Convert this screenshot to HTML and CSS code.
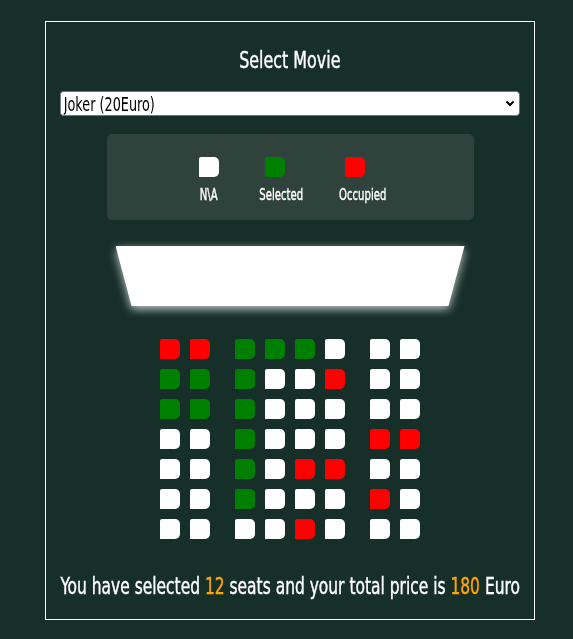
FILE: index.html
```html
<!DOCTYPE html>
<html lang="en">
<head>
<meta charset="utf-8">
<title>Movie Seat Booking</title>
<link rel="stylesheet" href="styles.css">
</head>
<body>
<div class="booking">
  <h1 class="title"><span class="squeeze">Select Movie</span></h1>
  <div class="select-wrap">
    <select class="movie-select">
      <option>Joker (20Euro)</option>
      <option>Avengers (25Euro)</option>
      <option>Toy Story (15Euro)</option>
    </select>
    <svg class="chevron" width="10" height="7" viewBox="0 0 10 7"><polyline points="1.5,1.5 5,5 8.5,1.5" fill="none" stroke="#000" stroke-width="2"/></svg>
  </div>

  <ul class="legend">
    <li class="legend-item na"><span class="seat"></span><small class="legend-label">N\A</small></li>
    <li class="legend-item sel"><span class="seat selected"></span><small class="legend-label">Selected</small></li>
    <li class="legend-item occ"><span class="seat occupied"></span><small class="legend-label">Occupied</small></li>
  </ul>

  <div class="screen-wrap"><div class="screen"></div></div>

  <div class="seats">
    <div class="row"><span class="seat occupied"></span><span class="seat occupied aisle"></span><span class="seat selected"></span><span class="seat selected"></span><span class="seat selected"></span><span class="seat aisle"></span><span class="seat"></span><span class="seat"></span></div>
    <div class="row"><span class="seat selected"></span><span class="seat selected aisle"></span><span class="seat selected"></span><span class="seat"></span><span class="seat"></span><span class="seat occupied aisle"></span><span class="seat"></span><span class="seat"></span></div>
    <div class="row"><span class="seat selected"></span><span class="seat selected aisle"></span><span class="seat selected"></span><span class="seat"></span><span class="seat"></span><span class="seat aisle"></span><span class="seat"></span><span class="seat"></span></div>
    <div class="row"><span class="seat"></span><span class="seat aisle"></span><span class="seat selected"></span><span class="seat"></span><span class="seat"></span><span class="seat aisle"></span><span class="seat occupied"></span><span class="seat occupied"></span></div>
    <div class="row"><span class="seat"></span><span class="seat aisle"></span><span class="seat selected"></span><span class="seat"></span><span class="seat occupied"></span><span class="seat occupied aisle"></span><span class="seat"></span><span class="seat"></span></div>
    <div class="row"><span class="seat"></span><span class="seat aisle"></span><span class="seat selected"></span><span class="seat"></span><span class="seat"></span><span class="seat aisle"></span><span class="seat occupied"></span><span class="seat"></span></div>
    <div class="row"><span class="seat"></span><span class="seat aisle"></span><span class="seat"></span><span class="seat"></span><span class="seat occupied"></span><span class="seat aisle"></span><span class="seat"></span><span class="seat"></span></div>
  </div>

  <p class="summary"><span class="squeeze">You have selected <span class="count">12</span> seats and your total price is <span class="count">180</span> Euro</span></p>
</div>
</body>
</html>
```
FILE: styles.css
```css
* { box-sizing: border-box; }

html, body {
  margin: 0;
  padding: 0;
  background: #172f29;
}

body {
  padding-top: 21px;
  font-family: "DejaVu Sans Condensed", "DejaVu Sans", sans-serif;
  font-stretch: condensed;
  color: #ffffff;
}

.booking {
  width: 490px;
  margin-left: 45px;
  border: 1px solid #ffffff;
  padding: 23px 14px 0;
  height: 599px;
  display: flex;
  flex-direction: column;
  align-items: center;
}

.squeeze {
  display: inline-block;
  white-space: nowrap;
  transform: scaleX(0.77);
  transform-origin: center;
}

.title {
  margin: 0;
  font-size: 23px;
  line-height: 30px;
  font-weight: normal;
  -webkit-text-stroke: 0.4px #ffffff;
  display: flex;
  justify-content: center;
  width: 100%;
}

.select-wrap {
  position: relative;
  align-self: stretch;
  margin-top: 16px;
  height: 25px;
}

.movie-select {
  display: block;
  -webkit-appearance: none;
  appearance: none;
  width: 133.33%;
  height: 25px;
  transform: scaleX(0.75);
  transform-origin: left center;
  font-family: inherit;
  font-stretch: condensed;
  font-size: 19px;
  color: #000;
  background: #fff;
  border: 1px solid #767676;
  border-radius: 5.33px / 4px;
  padding: 0 0 0 4px;
  margin: 0;
}

.chevron {
  position: absolute;
  right: 5px;
  top: 9px;
}

.legend {
  list-style: none;
  margin: 18px 0 0;
  width: 367px;
  height: 86px;
  padding: 18px 0 0;
  background: #2f423c;
  border-radius: 5px;
  display: flex;
  justify-content: center;
  gap: 36px;
}

.legend-item {
  display: flex;
  flex-direction: column;
  align-items: flex-start;
}

.legend-item.na { width: 30px; }
.legend-item.sel { width: 44px; }
.legend-item.occ { width: 47px; }

.legend-label {
  align-self: center;
  white-space: nowrap;
  font-size: 16px;
  line-height: 18px;
  margin-top: 4px;
  -webkit-text-stroke: 0.4px #ffffff;
  transform: scaleX(0.7);
}

.seat {
  display: block;
  width: 20px;
  height: 20px;
  margin: 5px;
  background: #ffffff;
  border-radius: 2px 5px 5px 0;
}

.seat.selected { background: #008000; }
.seat.occupied { background: #ff0000; }
.seat.aisle { margin-right: 20px; }

.screen-wrap {
  margin-top: 26px;
  filter: drop-shadow(0 3px 5px rgba(255, 255, 255, 0.75));
}

.screen {
  width: 349px;
  height: 60px;
  background: #ffffff;
  clip-path: polygon(0 0, 100% 0, 95.4% 100%, 4.6% 100%);
}

.seats {
  margin-top: 28px;
  display: flex;
  flex-direction: column;
}

.row {
  display: flex;
}

.summary {
  margin: 27px 0 0;
  font-size: 23px;
  line-height: 30px;
  width: 100%;
  display: flex;
  justify-content: center;
  -webkit-text-stroke: 0.4px #ffffff;
}

.summary .squeeze { transform: scaleX(0.748); }

.count { color: #ffa500; -webkit-text-stroke: 0.4px #ffa500; }
```
